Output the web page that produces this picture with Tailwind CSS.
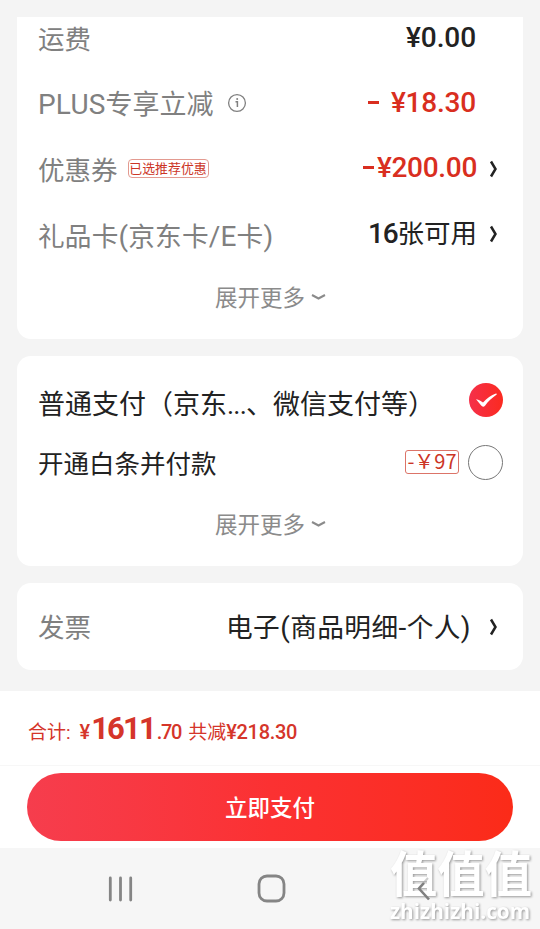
<!DOCTYPE html>
<html lang="zh-CN">
<head>
<meta charset="utf-8">
<title>收银台</title>
<script src="https://cdn.jsdelivr.net/npm/@tailwindcss/browser@4"></script>
</head>
<body class="w-[540px] h-[929px] overflow-hidden bg-[#f4f4f4] font-['Roboto','Noto_Sans_CJK_SC',sans-serif] text-[26.7px] leading-none text-[#222] whitespace-nowrap">
<main class="flex flex-col h-[929px]">
  <div class="flex flex-col gap-[17px] px-[17px] pt-[17px] h-[691px] shrink-0">
    <section class="h-[322px] bg-white rounded-b-[14px] pl-[21px] pr-[20px] text-[#808080]">
      <div class="h-[54px] pb-[11px] flex items-center justify-between">
        <span class="text-[26.5px] mt-[4px]">运费</span>
        <span class="font-medium text-[28px] tracking-[-0.1px] text-[#222] mr-[27px] -mt-[2px]">¥0.00</span>
      </div>
      <div class="h-[65px] flex items-center">
        <span class="text-[27px] mt-[3px]"><span class="text-[28px] tracking-[0.2px]">PLUS</span>专享立减</span>
        <svg class="ml-[13px] w-[20px] h-[20px] -mt-[2px]" viewBox="0 0 20 20" fill="none" stroke="#808080"><circle cx="10" cy="10" r="8.4" stroke-width="1.3"/><path d="M8.5 8.8h1.9v5.2" stroke-width="1.5"/><circle cx="10.2" cy="6" r="1" fill="#808080" stroke="none"/></svg>
        <span class="ml-auto font-medium text-[28px] tracking-[-0.2px] text-[#d92e20] mr-[27px] -mt-[2px] flex items-center"><i class="w-[11px] h-[3px] bg-[#d92e20] mr-[12px]"></i>¥18.30</span>
      </div>
      <div class="h-[65px] flex items-center">
        <span class="text-[26.5px] mt-[6px]">优惠券</span>
        <span class="ml-[10px] h-[19px] w-[81px] rounded-[4px] border border-[#e39a90] text-[#cc3526] text-[12.9px] flex items-center justify-center pt-[2px]">已选推荐优惠</span>
        <span class="ml-auto font-medium text-[28px] tracking-[-0.3px] text-[#d92e20] -mt-[2px] flex items-center"><i class="w-[11px] h-[3px] bg-[#d92e20] mr-[3px]"></i>¥200.00</span>
        <svg class="ml-[11px] mr-[3px] w-[12px] h-[20px]" viewBox="0 0 12 20" fill="none" stroke="#222" stroke-width="2.5"><path d="M3 2.5 7.5 10 3 17.5"/></svg>
      </div>
      <div class="h-[66px] flex items-center">
        <span class="mt-[5px] tracking-[0.15px]">礼品卡<span class="text-[28px]">(</span>京东卡<span class="text-[28px]">/E</span>卡<span class="text-[28px]">)</span></span>
        <span class="ml-auto text-[#222] text-[26.5px] flex items-center"><b class="font-medium text-[28px] tracking-[-1.2px] mb-[1px]">16</b>张可用</span>
        <svg class="ml-[11px] mr-[3px] w-[12px] h-[20px]" viewBox="0 0 12 20" fill="none" stroke="#222" stroke-width="2.5"><path d="M3 2.5 7.5 10 3 17.5"/></svg>
      </div>
      <div class="h-[60px] flex items-center justify-center text-[22.5px] text-[#8b8b8b]">
        <span class="mt-[2px]">展开更多</span>
        <svg class="ml-[6px] w-[15px] h-[8px]" viewBox="0 0 15 8" fill="none" stroke="#8b8b8b" stroke-width="2"><path d="M1 2 7.5 5.5 14 2"/></svg>
      </div>
    </section>

    <section class="h-[210px] bg-white rounded-[14px] pl-[21px] pr-[20px] pt-[16px]">
      <div class="h-[60px] flex items-center justify-between">
        <span class="text-[27px] mt-[6px]">普通支付（京东<span class="tracking-[-0.8px]">...</span>、微信支付等）</span>
        <svg class="w-[34px] h-[34px] -mt-[4px]" viewBox="0 0 34 34"><defs><linearGradient id="tick" x1="0" x2="1"><stop stop-color="#f5304a"/><stop offset="1" stop-color="#fb2a20"/></linearGradient></defs><circle cx="17" cy="17" r="17" fill="url(#tick)"/><path d="M7 16.2 C10 16.5 12 18 14 19.6 C18 15 22 12 27 10.5 C28 10.4 28 11.3 27.4 11.8 C23 15 19 18.5 16.2 22.4 C14.8 24 13.4 24 12.2 22.6 Z" fill="#fff"/></svg>
      </div>
      <div class="h-[61px] flex items-center">
        <span class="text-[25.5px] mt-[4px]">开通白条并付款</span>
        <span class="ml-auto w-[54px] h-[24px] pb-[2px] rounded-[3px] border border-[#dc7468] text-[#cc3526] text-[20px] flex items-center justify-center font-['Noto_Sans_CJK_SC',sans-serif] -mt-[1px]">-￥97</span>
        <span class="ml-[9px] w-[35px] h-[35px] rounded-full border border-[#777] -mt-[1px]"></span>
      </div>
      <div class="h-[62px] flex items-center justify-center text-[22.5px] text-[#8b8b8b]">
        <span class="mt-[2px]">展开更多</span>
        <svg class="ml-[6px] w-[15px] h-[8px]" viewBox="0 0 15 8" fill="none" stroke="#8b8b8b" stroke-width="2"><path d="M1 2 7.5 5.5 14 2"/></svg>
      </div>
    </section>

    <section class="h-[87px] bg-white rounded-[14px] pl-[21px] pr-[20px] flex items-center">
      <span class="text-[#808080] text-[26.5px] mt-[4px]">发票</span>
      <span class="ml-auto mt-[3px] tracking-[0.4px]">电子<span class="text-[28px]">(</span>商品明细<span class="text-[28px]">-</span>个人<span class="text-[28px]">)</span></span>
      <svg class="ml-[17px] mr-[3px] w-[12px] h-[20px]" viewBox="0 0 12 20" fill="none" stroke="#222" stroke-width="2.5"><path d="M3 2.5 7.5 10 3 17.5"/></svg>
    </section>
  </div>

  <footer class="h-[157px] shrink-0 bg-white">
    <div class="h-[75px] px-[28px] pt-[22px] border-b border-[#f7f7f7] flex items-baseline text-[#d5352a] text-[19px]">
      <span>合计:</span>
      <span class="ml-[9px] font-medium text-[20px]">¥</span>
      <span class="ml-[1px] font-bold text-[31px] tracking-[-1.9px]">1611</span>
      <span class="font-medium text-[20px] tracking-[-1.3px] ml-[2px]">.70</span>
      <span class="ml-[7px]">共减</span>
      <span class="font-medium text-[20px] tracking-[-0.3px]">¥218.30</span>
    </div>
    <button class="mt-[7px] ml-[27px] w-[486px] h-[68px] pt-[2px] rounded-full bg-linear-to-r from-[#f63d4d] via-[#fb3132] to-[#fb2b18] text-white font-medium text-[22.5px] flex items-center justify-center">立即支付</button>
  </footer>

  <nav class="relative h-[81px] shrink-0 bg-[#f6f6f6] flex items-center">
    <svg class="ml-[108px] w-[25px] h-[26px]" viewBox="0 0 25 26" stroke="#858585" stroke-width="2.8" stroke-linecap="round"><path d="M2.3 2v22M12.5 2v22M22.7 2v22"/></svg>
    <svg class="ml-[124px] w-[29px] h-[29px]" viewBox="0 0 29 29" fill="none" stroke="#858585" stroke-width="2.8"><rect x="2" y="2" width="25" height="25" rx="8"/></svg>
    <div class="absolute left-[389px] top-0">
      <svg class="block w-[145px] h-[81px] overflow-visible [filter:drop-shadow(1px_1px_1px_#999)]" viewBox="0 0 145 81" fill="#fff">
        <text x="1" y="44" font-size="49" font-weight="700" font-family="Noto Sans CJK SC, sans-serif" textLength="142" lengthAdjust="spacingAndGlyphs">值值值</text>
        <text x="1" y="71" font-size="22" font-weight="700" font-family="Open Sans, sans-serif" textLength="140" lengthAdjust="spacingAndGlyphs">zhizhizhi.com</text>
      </svg>
    </div>
    <svg class="relative ml-[129px] w-[18px] h-[26px]" viewBox="0 0 18 26" fill="none"><path d="M13 2 4 12" stroke="#aaa" stroke-opacity=".6" stroke-width="2"/><path d="M9 7 4 12.5 14 23.5" stroke="#808080" stroke-width="2.6"/></svg>
  </nav>
</main>
</body>
</html>
